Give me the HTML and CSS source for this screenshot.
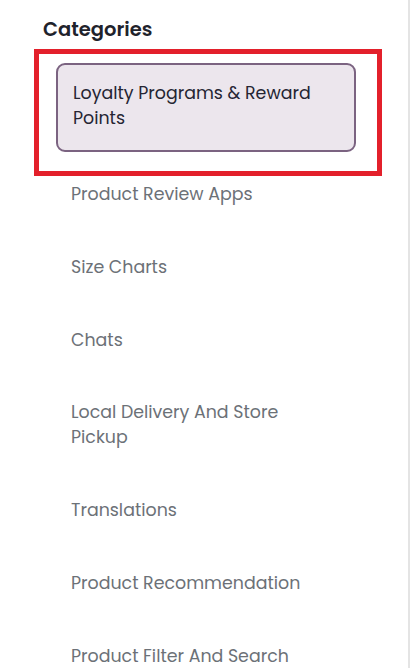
FILE: index.html
```html
<!DOCTYPE html>
<html lang="en">
<head>
<meta charset="utf-8">
<title>Categories</title>
<link rel="stylesheet" href="styles.css">
</head>
<body>
<aside class="sidebar">
  <h2 class="title">Categories</h2>
  <div class="highlight">
    <a class="cat cat-active" href="#">Loyalty Programs &amp; Reward Points</a>
  </div>
  <ul class="list">
    <li><a class="cat" href="#">Product Review Apps</a></li>
    <li><a class="cat" href="#">Size Charts</a></li>
    <li><a class="cat" href="#">Chats</a></li>
    <li><a class="cat" href="#">Local Delivery And Store Pickup</a></li>
    <li><a class="cat" href="#">Translations</a></li>
    <li><a class="cat" href="#">Product Recommendation</a></li>
    <li><a class="cat" href="#">Product Filter And Search</a></li>
  </ul>
</aside>
</body>
</html>
```
FILE: styles.css
```css
html, body {
  margin: 0;
  padding: 0;
  background: #ffffff;
}
body {
  font-family: "Poppins", Inter, "Noto Sans", sans-serif;
  height: 668px;
  overflow: hidden;
}
.sidebar {
  width: 408px;
  height: 668px;
  border-right: 2px solid #e4e4e4;
  box-sizing: content-box;
  display: flex;
  flex-direction: column;
}
.title {
  margin: 16px 0 0 43px;
  font-size: 19.5px;
  line-height: 28px;
  font-weight: 600;
  color: #1f232c;
}
.highlight {
  margin: 5px 0 0 34px;
  border: 5px solid #e3202b;
  padding: 9px 21px 19px 17px;
  box-sizing: border-box;
  width: 348px;
}
.cat {
  display: block;
  width: 300px;
  box-sizing: border-box;
  text-decoration: none;
  font-size: 17.4px;
  line-height: 25px;
  border: 2px solid transparent;
  border-radius: 9px;
}
.cat-active {
  background: #ece6ed;
  border-color: #7b6381;
  color: #252533;
  padding: 16px 20px 19px 15px;
}
.list {
  list-style: none;
  margin: 4px 0 0 56px;
  padding: 0;
  display: flex;
  flex-direction: column;
  gap: 43.8px;
}
.list .cat {
  color: #6c7177;
  padding: 0 30px 0 13px;
}
```
